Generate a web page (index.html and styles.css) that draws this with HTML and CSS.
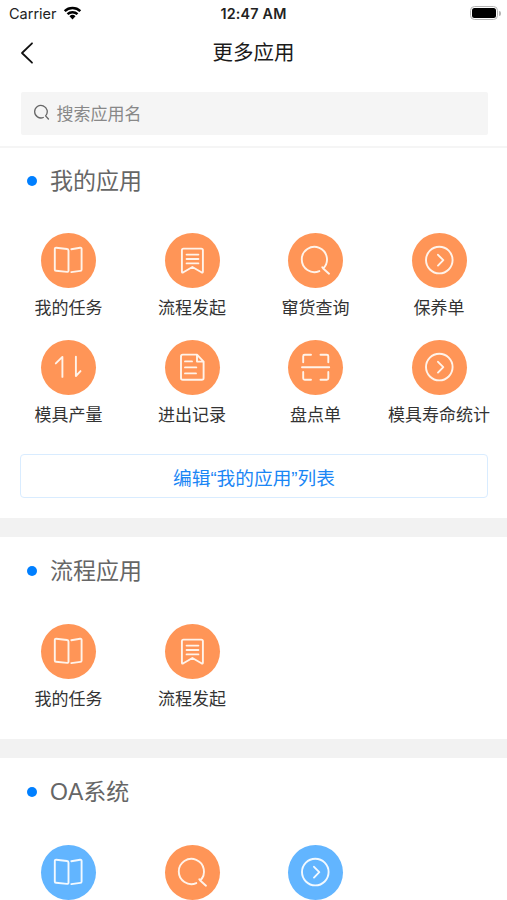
FILE: index.html
```html
<!DOCTYPE html>
<html lang="zh-CN">
<head>
<meta charset="utf-8">
<title>更多应用</title>
<link rel="stylesheet" href="styles.css">
</head>
<body>
<svg class="sprite" aria-hidden="true">
  <symbol id="book" viewBox="0 0 55 55"><path d="M15.2 14.8 26 16q1.5.2 1.5 1.7V37.5q0 1.5-1.5 1.4L15 37.8q-1.2-.1-1.2-1.4V16q0-1.3 1.4-1.2ZM30.3 16.2l8.8-1.4q1.5-.2 1.5 1.3V36.4q0 1.3-1.3 1.5l-9 1.2"/></symbol>
  <symbol id="bookmark" viewBox="0 0 55 55"><path d="M18.5 15.6h17.8q1.6 0 1.6 1.6v21.3q0 1.8-1.5.8l-9-5.3-9 5.3q-1.5 1-1.5-.8V17.2q0-1.6 1.6-1.6ZM21.6 21.6h11.8M21.6 26h11.8M21.6 30.4h11.8"/></symbol>
  <symbol id="search" viewBox="0 0 55 55"><path d="M31.3 38.1A12.6 12.6 0 1 1 35.2 35.5L41 40.7M35.2 35.5l-.9-1.3"/></symbol>
  <symbol id="next" viewBox="0 0 55 55"><circle cx="27.3" cy="27.1" r="13.3"/><path d="m26 21.8 5.3 5.4-5.3 5.4"/></symbol>
  <symbol id="swap" viewBox="0 0 55 55"><path d="m14.8 23.4 6.6-6.5v20M34.9 16.6v19.4l4.6-4.9"/></symbol>
  <symbol id="doc" viewBox="0 0 55 55"><path d="M17.8 14.6H32l6.6 7v16.3q0 1.8-1.8 1.8h-19q-1.8 0-1.8-1.8V16.4q0-1.8 1.8-1.8ZM32 15v6.6h6.3M20 21.4h7M20 27.4h11.3M20 33.4h11"/></symbol>
  <symbol id="scan" viewBox="0 0 55 55"><path d="M23 14.8h-6.3q-1.5 0-1.5 1.5v6M32.5 14.8h6.3q1.5 0 1.5 1.5v6M23 39.7h-6.3q-1.5 0-1.5-1.5v-6.2M32.5 39.7h6.3q1.5 0 1.5-1.5v-6.2M14 27.2h27.2"/></symbol>
</svg>
<div class="statusbar">
  <div class="carrier">Carrier
    <svg class="wifi" viewBox="0 0 18 14"><path class="arc" d="M1.2 5.2a11.3 11.3 0 0 1 15.6 0M4 8.2a7.2 7.2 0 0 1 10 0"/><path d="M9 13.4 6 10.3a4.3 4.3 0 0 1 6 0Z"/></svg>
  </div>
  <div class="time">12:47 AM</div>
  <div class="power"><span class="battery"></span><span class="tip"></span></div>
</div>
<header class="navbar">
  <svg class="back" viewBox="0 0 14 22"><path d="M12 1.3 2 11l10 9.7"/></svg>
  <h1>更多应用</h1>
</header>
<div class="search">
  <svg viewBox="0 0 17 17"><path d="M10.3 13.5A6.3 6.3 0 1 1 12.6 11.9L15.4 15"/></svg>
  <span>搜索应用名</span>
</div>
<main>
  <section class="mine">
    <h2>我的应用</h2>
    <div class="grid">
      <div class="app"><svg><use href="#book"/></svg><span>我的任务</span></div>
      <div class="app"><svg><use href="#bookmark"/></svg><span>流程发起</span></div>
      <div class="app"><svg><use href="#search"/></svg><span>窜货查询</span></div>
      <div class="app"><svg><use href="#next"/></svg><span>保养单</span></div>
      <div class="app"><svg><use href="#swap"/></svg><span>模具产量</span></div>
      <div class="app"><svg><use href="#doc"/></svg><span>进出记录</span></div>
      <div class="app"><svg><use href="#scan"/></svg><span>盘点单</span></div>
      <div class="app"><svg><use href="#next"/></svg><span>模具寿命统计</span></div>
    </div>
    <div class="edit">编辑“我的应用”列表</div>
  </section>
  <section class="flow">
    <h2>流程应用</h2>
    <div class="grid">
      <div class="app"><svg><use href="#book"/></svg><span>我的任务</span></div>
      <div class="app"><svg><use href="#bookmark"/></svg><span>流程发起</span></div>
    </div>
  </section>
  <section class="oa">
    <h2>OA系统</h2>
    <div class="grid">
      <div class="app blue"><svg><use href="#book"/></svg></div>
      <div class="app"><svg><use href="#search"/></svg></div>
      <div class="app blue"><svg><use href="#next"/></svg></div>
    </div>
  </section>
</main>
</body>
</html>
```
FILE: styles.css
```css
* { box-sizing: border-box; }
body {
  margin: 0;
  background: #fff;
  color: #333;
  font-family: "Liberation Sans", "Noto Sans CJK SC", sans-serif;
}
h1, h2 { margin: 0; font-weight: 400; }
svg { fill: none; stroke-linecap: round; stroke-linejoin: round; flex: none; }
.sprite { display: none; }

.statusbar {
  display: grid;
  grid-template-columns: 1fr auto 1fr;
  align-items: center;
  height: 27px;
  padding: 0 6px;
  font-family: Inter, sans-serif;
  font-size: 14.5px;
  color: #222;
}
.carrier { display: flex; align-items: center; gap: 6px; padding-left: 3px; }
.wifi { width: 19px; height: 14px; margin-top: -2px; fill: #000; }
.wifi .arc { fill: none; stroke: #000; stroke-width: 2.5; stroke-linecap: butt; }
.time { font-size: 14.3px; font-weight: 600; letter-spacing: .2px; }
.power { display: flex; align-items: center; justify-content: flex-end; gap: 1px; margin-top: -1px; }
.battery {
  width: 28px;
  height: 14px;
  border: 1.5px solid #b5b5b5;
  border-radius: 4.5px;
  background: #000;
  background-clip: content-box;
  padding: 1px;
}
.tip { width: 2px; height: 5px; border-radius: 0 2px 2px 0; background: #b5b5b5; }

.navbar {
  display: grid;
  grid-template-columns: 40px 1fr 40px;
  align-items: center;
  height: 51px;
}
.back { width: 14px; height: 22px; margin-left: 19.5px; stroke: #111; stroke-width: 1.8; }
h1 { font-size: 20.5px; line-height: 30px; text-align: center; color: #1a1a1a; }

.search {
  display: flex;
  align-items: center;
  gap: 7px;
  height: 43px;
  margin: 14px 19.5px 11px 20.5px;
  padding: 0 0 2px 12px;
  border-radius: 2px;
  background: #f5f5f5;
  color: #888;
  font-size: 17px;
}
.search svg { width: 17px; height: 17px; stroke: #666; stroke-width: 1.3; }

section { border-bottom: 19px solid #f2f2f2; }
.mine { height: 391px; border-top: 2px solid #f5f5f5; }
.flow { height: 221px; }
.oa { height: 142px; border-bottom: 0; }

h2 {
  display: flex;
  align-items: center;
  gap: 13px;
  height: 68px;
  padding-left: 27px;
  font-size: 23px;
  line-height: 34px;
  color: #666;
}
h2::before { content: ""; width: 10px; height: 10px; border-radius: 50%; background: #007fff; }
.mine h2 { height: 66px; }
.grid {
  display: grid;
  grid-template-columns: repeat(4, 123.5px);
  grid-auto-rows: 107.5px;
  padding: 18.7px 0 0 6.8px;
}
.oa .grid { grid-auto-rows: 55px; }
.app { display: flex; flex-direction: column; align-items: center; gap: 8px; }
.app svg {
  width: 55px;
  height: 55px;
  border-radius: 50%;
  background: #ff9557;
  stroke: #fff3ea;
  stroke-width: 1.9;
}
.app.blue svg { background: #62b5ff; stroke: #f2f9ff; }
.app span { font-size: 17px; line-height: 25px; white-space: nowrap; }
.edit {
  display: flex;
  align-items: center;
  justify-content: center;
  height: 44px;
  margin: 6.6px 19px 0 20px;
  border: 1.5px solid #d9ecff;
  border-radius: 4px;
  font-size: 18.7px;
  color: #1a86f5;
}
.oa { overflow: hidden; }
```
